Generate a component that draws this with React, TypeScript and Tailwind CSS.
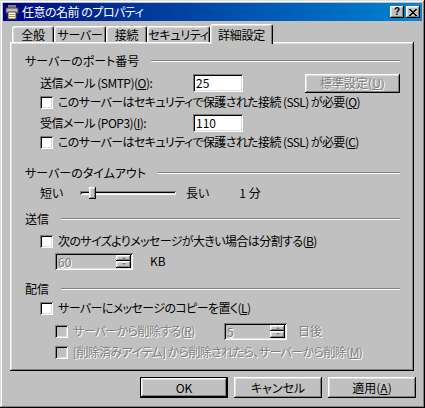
import React from 'react';

// Win98 style bevels
const raised =
  'shadow-[inset_-1px_-1px_0_#000,inset_1px_1px_0_#fff,inset_-2px_-2px_0_#808080,inset_2px_2px_0_#dfdfdf]';
const sunken =
  'shadow-[inset_1px_1px_0_#808080,inset_-1px_-1px_0_#fff,inset_2px_2px_0_#000,inset_-2px_-2px_0_#dfdfdf]';
const dim = 'text-[#808080] [text-shadow:1px_1px_0_#fff]';

const GroupLabel = ({ text }: { text: string }) => (
  <div className="flex items-center h-[18px] pr-[14px]">
    <span>{text}</span>
    <div className="flex-1 ml-[12px] h-[2px] border-t border-t-[#808080] border-b border-b-white" />
  </div>
);

const Check = ({ children, disabled }: { children: React.ReactNode; disabled?: boolean }) => (
  <div className="flex items-center h-[18px]">
    <span className={`w-[13px] h-[13px] shrink-0 ${sunken} ${disabled ? 'bg-[#c0c0c0]' : 'bg-white'}`} />
    <span className={`ml-[5px] whitespace-nowrap tracking-[-0.6px] ${disabled ? dim : ''}`}>{children}</span>
  </div>
);

const Spinner = ({ value, width }: { value: string; width: string }) => (
  <div className={`flex h-[17px] ${width} ${sunken} bg-[#c0c0c0] p-[2px]`}>
    <span className={`flex-1 pl-[1px] leading-[13px] ${dim}`}>{value}</span>
    <div className="flex flex-col w-[15px]">
      <div className={`flex-1 flex items-center justify-center ${raised} bg-[#c0c0c0]`}>
        <span className="w-0 h-0 border-x-[2px] border-x-transparent border-b-[2px] border-b-[#808080]" />
      </div>
      <div className={`flex-1 flex items-center justify-center ${raised} bg-[#c0c0c0]`}>
        <span className="w-0 h-0 border-x-[2px] border-x-transparent border-t-[2px] border-t-[#808080]" />
      </div>
    </div>
  </div>
);

const Tab = ({ label, w, active }: { label: string; w: string; active?: boolean }) => (
  <div
    className={`${w} flex items-center justify-center whitespace-nowrap tracking-[-0.3px] rounded-t-[3px] border-t border-l border-white border-r border-r-black bg-[#c0c0c0] shadow-[inset_-1px_0_0_#808080,inset_1px_1px_0_#dfdfdf] ${
      active ? 'h-[20px] relative z-10' : 'h-[16px] mt-[2px]'
    }`}
  >
    {label}
  </div>
);

const TitleIcon = () => (
  <svg width="16" height="16" viewBox="0 0 16 16">
    <rect x="4" y="1" width="8" height="4" fill="#808080" />
    <rect x="2" y="4" width="12" height="5" fill="#c0c0c0" stroke="#404040" strokeWidth="1" />
    <rect x="4" y="8" width="8" height="7" fill="#fff" stroke="#404040" strokeWidth="1" />
    <rect x="5" y="10" width="6" height="1" fill="#c0a000" />
    <rect x="5" y="12" width="6" height="1" fill="#c0a000" />
  </svg>
);

const Btn = ({ children, isDefault }: { children: React.ReactNode; isDefault?: boolean }) => (
  <div
    className={`w-[88px] h-[21px] flex items-center justify-center bg-[#c0c0c0] ${
      isDefault
        ? 'border border-black shadow-[inset_-1px_-1px_0_#000,inset_1px_1px_0_#fff,inset_-2px_-2px_0_#808080,inset_2px_2px_0_#dfdfdf]'
        : raised
    }`}
  >
    {children}
  </div>
);

export default function App() {
  return (
    <div
      className="w-[425px] h-[408px] bg-[#c0c0c0] p-[3px] flex flex-col text-[12px] leading-none text-black [font-family:'Noto_Sans_CJK_JP','Noto_Sans',sans-serif] [font-feature-settings:'palt'] shadow-[inset_-1px_-1px_0_#000,inset_1px_1px_0_#dfdfdf,inset_-2px_-2px_0_#808080,inset_2px_2px_0_#fff]"
    >
      {/* title bar */}
      <div className="h-[18px] flex items-center bg-gradient-to-r from-[#000080] to-[#1084d0] pl-[1px] pr-[2px]">
        <TitleIcon />
        <span className="ml-[2px] text-white tracking-[-0.5px]">任意の名前 のプロパティ</span>
        <div className="ml-auto flex gap-[2px]">
          <div className={`w-[14px] h-[12px] ${raised} bg-[#c0c0c0] flex items-center justify-center text-[10px] font-bold [font-family:'Liberation_Sans',sans-serif]`}>
            ?
          </div>
          <div className={`w-[14px] h-[12px] ${raised} bg-[#c0c0c0] flex items-center justify-center`}>
            <svg width="8" height="7" viewBox="0 0 8 7">
              <path d="M0 0L7 7M1 0L8 7M7 0L0 7M8 0L1 7" stroke="#000" strokeWidth="1" />
            </svg>
          </div>
        </div>
      </div>

      {/* tabs */}
      <div className="flex pl-[9px] mt-[3px] h-[18px]">
        <Tab label="全般" w="w-[42px]" />
        <Tab label="サーバー" w="w-[52px]" />
        <Tab label="接続" w="w-[41px]" />
        <Tab label="セキュリティ" w="w-[63px]" />
        <Tab label="詳細設定" w="w-[63px]" active />
      </div>

      {/* panel */}
      <div className={`ml-[7px] mr-[8px] h-[329px] ${raised} pl-[15px] pt-[10px] flex flex-col`}>
        <GroupLabel text="サーバーのポート番号" />
        <div className="flex items-center h-[20px] mt-[3px] pl-[15px]">
          <span className="w-[153px] tracking-[-0.5px]">
            送信メール (SMTP)(<u>O</u>):
          </span>
          <div className={`w-[50px] h-[18px] bg-white ${sunken} px-[3px] flex items-center`}>25</div>
          <div className={`ml-[62px] w-[95px] h-[19px] ${raised} flex items-center justify-center ${dim}`}>
            標準設定(<u>U</u>)
          </div>
        </div>
        <div className="pl-[15px]">
          <Check>
            このサーバーはセキュリティで保護された接続 (SSL) が必要(<u>Q</u>)
          </Check>
        </div>
        <div className="flex items-center h-[20px] mt-[2px] pl-[15px]">
          <span className="w-[153px] tracking-[-0.5px]">
            受信メール (POP3)(<u>I</u>):
          </span>
          <div className={`w-[50px] h-[18px] bg-white ${sunken} px-[3px] flex items-center`}>110</div>
        </div>
        <div className="pl-[15px]">
          <Check>
            このサーバーはセキュリティで保護された接続 (SSL) が必要(<u>C</u>)
          </Check>
        </div>

        <div className="mt-[13px]">
          <GroupLabel text="サーバーのタイムアウト" />
        </div>
        <div className="flex items-center h-[20px] mt-[1px] pl-[15px]">
          <span className="w-[40px]">短い</span>
          <div className="relative w-[96px] h-[20px]">
            <div className={`absolute left-0 right-0 top-[8px] h-[4px] ${sunken}`} />
            <div className={`absolute left-[9px] top-[4px] w-[7px] h-[12px] ${raised} bg-[#c0c0c0]`} />
          </div>
          <span className="ml-[10px]">長い</span>
          <span className="ml-[30px]">1 分</span>
        </div>

        <div className="mt-[7px]">
          <GroupLabel text="送信" />
        </div>
        <div className="pl-[15px] mt-[4px]">
          <Check>
            次のサイズよりメッセージが大きい場合は分割する(<u>B</u>)
          </Check>
        </div>
        <div className="flex items-center pl-[30px] mt-[2px] h-[18px]">
          <Spinner value="60" width="w-[78px]" />
          <span className="ml-[17px]">KB</span>
        </div>

        <div className="mt-[10px]">
          <GroupLabel text="配信" />
        </div>
        <div className="pl-[15px] mt-[1px]">
          <Check>
            サーバーにメッセージのコピーを置く(<u>L</u>)
          </Check>
        </div>
        <div className="flex items-center pl-[30px] mt-[5px]">
          <div className="w-[169px]">
            <Check disabled>
              サーバーから削除する(<u>R</u>)
            </Check>
          </div>
          <Spinner value="5" width="w-[63px]" />
          <span className={`ml-[11px] ${dim}`}>日後</span>
        </div>
        <div className="pl-[30px] mt-[3px]">
          <Check disabled>
            [削除済みアイテム] から削除されたら、サーバーから削除(<u>M</u>)
          </Check>
        </div>
      </div>

      {/* buttons */}
      <div className="flex justify-end gap-[6px] mt-[6px] mr-[6px]">
        <Btn isDefault>OK</Btn>
        <Btn>キャンセル</Btn>
        <Btn>
          適用(<u>A</u>)
        </Btn>
      </div>
    </div>
  );
}
